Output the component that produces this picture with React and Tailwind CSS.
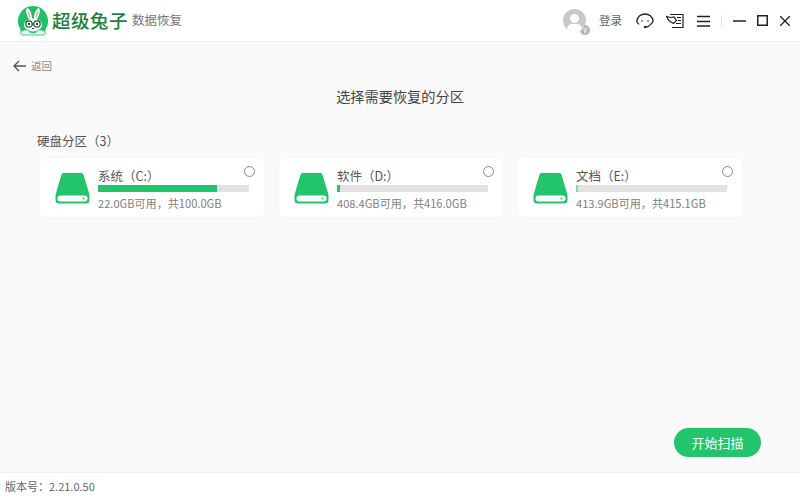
const DRIVES = [
  { name: '系统（C:）', free: '22.0GB可用，共100.0GB', used: 79 },
  { name: '软件（D:）', free: '408.4GB可用，共416.0GB', used: 2 },
  { name: '文档（E:）', free: '413.9GB可用，共415.1GB', used: 1, pale: true },
];

const FONT = "font-['Noto_Sans_CJK_SC','Noto_Sans',sans-serif]";

function RabbitLogo() {
  return (
    <svg width="32" height="31" viewBox="0 0 32 31">
      <path d="M16 1a15 15 0 0 1 13 22.500L27 29H5l-2-5.500A15 15 0 0 1 16 1z" fill="#22c069" />
      <path d="M10 3c3 1 5 6 5 11h-3C10 11 8 6 10 3zM22 3c-3 1-5 6-5 11h3c2-3 4-8 2-11z" fill="#fff" />
      <path d="M11 6c1.500 1.500 2.500 4 2.500 7h-.8C11.500 11 10.800 8 11 6zM21 6c-1.500 1.500-2.500 4-2.500 7h.8C20.500 11 21.200 8 21 6z" fill="#f2a0a8" />
      <ellipse cx="16" cy="20" rx="9" ry="6.500" fill="#fff" />
      <circle cx="12" cy="19" r="3.200" fill="#fff" stroke="#14532d" strokeWidth="1.200" />
      <circle cx="20" cy="19" r="3.200" fill="#fff" stroke="#14532d" strokeWidth="1.200" />
      <circle cx="12" cy="19" r="1.200" fill="#14532d" />
      <circle cx="20" cy="19" r="1.200" fill="#14532d" />
      <path d="M15.200 19h1.600M15 23.500h2" stroke="#14532d" strokeWidth="1" />
      <path d="M3 27c3-2 6-2.500 8-2 1 1.500 2 3 5 3s4-1.500 5-3c2-.5 5 0 8 2l-2 3H5z" fill="#e9f9ef" stroke="#22c069" strokeWidth="0.800" />
    </svg>
  );
}

function DiskIcon() {
  return (
    <svg className="mt-[2px]" width="35" height="31" viewBox="0 0 35 31">
      <path d="M6.500 1.500A2.500 2.500 0 0 1 9 0h17a2.500 2.500 0 0 1 2.500 1.500L34 20H1z" fill="#22c56b" />
      <rect x="0.500" y="19" width="34" height="11.500" rx="3.500" fill="#22c56b" />
      <rect x="2.500" y="22.500" width="30" height="6" rx="3" fill="#fff" />
      <circle cx="28.500" cy="25.500" r="1" fill="#22c56b" />
    </svg>
  );
}

function DriveCard({ drive }) {
  return (
    <div className="relative w-[224px] h-[59px] bg-white rounded-md flex items-center pl-[15px] shadow-[0_0_4px_rgba(0,0,0,0.03)]">
      <DiskIcon />
      <div className="ml-[8px] w-[151px] mt-[3px]">
        <div className="text-[12.500px] leading-[18px] text-[#555]">{drive.name}</div>
        <div className="h-[7px] bg-[#e3e3e3]">
          <div
            className={drive.pale ? 'h-full bg-[#7fdcaa]' : 'h-full bg-[#22c56b]'}
            style={{ width: `${drive.used}%` }}
          />
        </div>
        <div className="text-[11.100px] leading-[16px] mt-[3px] text-[#808080] whitespace-nowrap">{drive.free}</div>
      </div>
      <span className="absolute right-[9px] top-[8px] w-[11px] h-[11px] rounded-full border border-[#888] bg-white" />
    </div>
  );
}

export default function App() {
  return (
    <div className={`w-[800px] h-[500px] flex flex-col bg-white overflow-hidden ${FONT}`}>
      <header className="h-[42px] shrink-0 bg-white border-b border-[#f2f2f2] flex items-center pl-[17px]">
        <RabbitLogo />
        <span className="ml-[3px] text-[18.500px] font-medium text-[#1b7f3d] tracking-[0.5px] leading-none whitespace-nowrap">超级兔子</span>
        <span className="ml-[4px] text-[12.500px] text-[#777] leading-none whitespace-nowrap">数据恢复</span>

        <div className="ml-auto flex items-center">
          <div className="relative w-[23px] h-[23px] rounded-full bg-[#c9c9c9] overflow-hidden">
            <span className="absolute left-[7px] top-[5px] w-[9px] h-[9px] rounded-full bg-white" />
            <span className="absolute left-[4px] top-[15px] w-[15px] h-[10px] rounded-full bg-white" />
          </div>
          <span className="ml-[-7px] mt-[18px] w-[12px] h-[12px] rounded-full bg-[#b5b5b5] border border-white text-white text-[7px] leading-[10px] text-center">V</span>
          <span className="ml-[8px] text-[11.500px] text-[#666] whitespace-nowrap">登录</span>

          <svg className="ml-[14px]" width="18" height="18" viewBox="0 0 18 18" fill="none" stroke="#222" strokeWidth="1.300">
            <path d="M2.700 12C1 11 .8 9.500 1 8.500 1.500 4.500 5 2 9 2s7.500 2.500 8 6.500c.2 1-.5 2.500-2 3.500-1 1.500-3 2.800-5 3" strokeLinecap="round" />
            <circle cx="6" cy="9" r="0.800" fill="#222" stroke="none" />
            <circle cx="12" cy="9" r="0.800" fill="#222" stroke="none" />
            <circle cx="9" cy="15" r="1.200" fill="#222" stroke="none" />
          </svg>
          <svg className="ml-[12px]" width="18" height="16" viewBox="0 0 18 16" fill="none" stroke="#222" strokeWidth="1.200">
            <path d="M4 1.500h13v13H6" />
            <path d="M.5 3.500l4.500 1 3-.5 2.500 3.500-3 3L5 9 2.500 7z" fill="#fff" />
            <path d="M11 4.500h4M12 7.500h3M10 10.500h5" />
          </svg>
          <svg className="ml-[13px]" width="13" height="12" viewBox="0 0 13 12" stroke="#222" strokeWidth="1.400">
            <path d="M0 1.500h13M0 6.500h13M0 11h13" />
          </svg>
          <span className="ml-[11px] w-px h-[12px] bg-[#e2e2e2]" />
          <svg className="ml-[11px]" width="13" height="12" viewBox="0 0 13 12" stroke="#222" strokeWidth="1.500">
            <path d="M0 6h13" />
          </svg>
          <svg className="ml-[11px]" width="11" height="11" viewBox="0 0 11 11" fill="none" stroke="#222" strokeWidth="1.500">
            <rect x="0.750" y="0.750" width="9.500" height="9.500" />
          </svg>
          <svg className="ml-[12px] mr-[10px]" width="10" height="10" viewBox="0 0 10 10" stroke="#222" strokeWidth="1.300">
            <path d="M0 0l10 10M10 0L0 10" />
          </svg>
        </div>
      </header>

      <main className="flex-1 bg-[#fafafa] flex flex-col relative">
        <div className="flex items-center pl-[13px] pt-[16px] h-[32px]">
          <svg width="13" height="12" viewBox="0 0 13 12" fill="none" stroke="#555" strokeWidth="1.400">
            <path d="M13 6H1M6 1L1 6l5 5" />
          </svg>
          <span className="ml-[5px] text-[10.500px] text-[#888]">返回</span>
        </div>
        <h1 className="mt-[10px] text-center text-[14.200px] leading-[24px] font-normal text-[#444]">选择需要恢复的分区</h1>
        <div className="ml-[37px] mt-[24px] text-[12.500px] leading-[18px] text-[#555]">硬盘分区（3）</div>
        <div className="ml-[40px] mt-[8px] flex gap-[15px]">
          {DRIVES.map((d) => (
            <DriveCard key={d.name} drive={d} />
          ))}
        </div>
        <button className="absolute right-[39px] bottom-[15px] w-[87px] h-[29px] rounded-full bg-[#22c56b] text-white text-[13px] leading-none">开始扫描</button>
      </main>

      <footer className="h-[28px] shrink-0 bg-white border-t border-[#f0f0f0] flex items-center pl-[5px] text-[11px] text-[#666]">版本号：2.21.0.50</footer>
    </div>
  );
}
